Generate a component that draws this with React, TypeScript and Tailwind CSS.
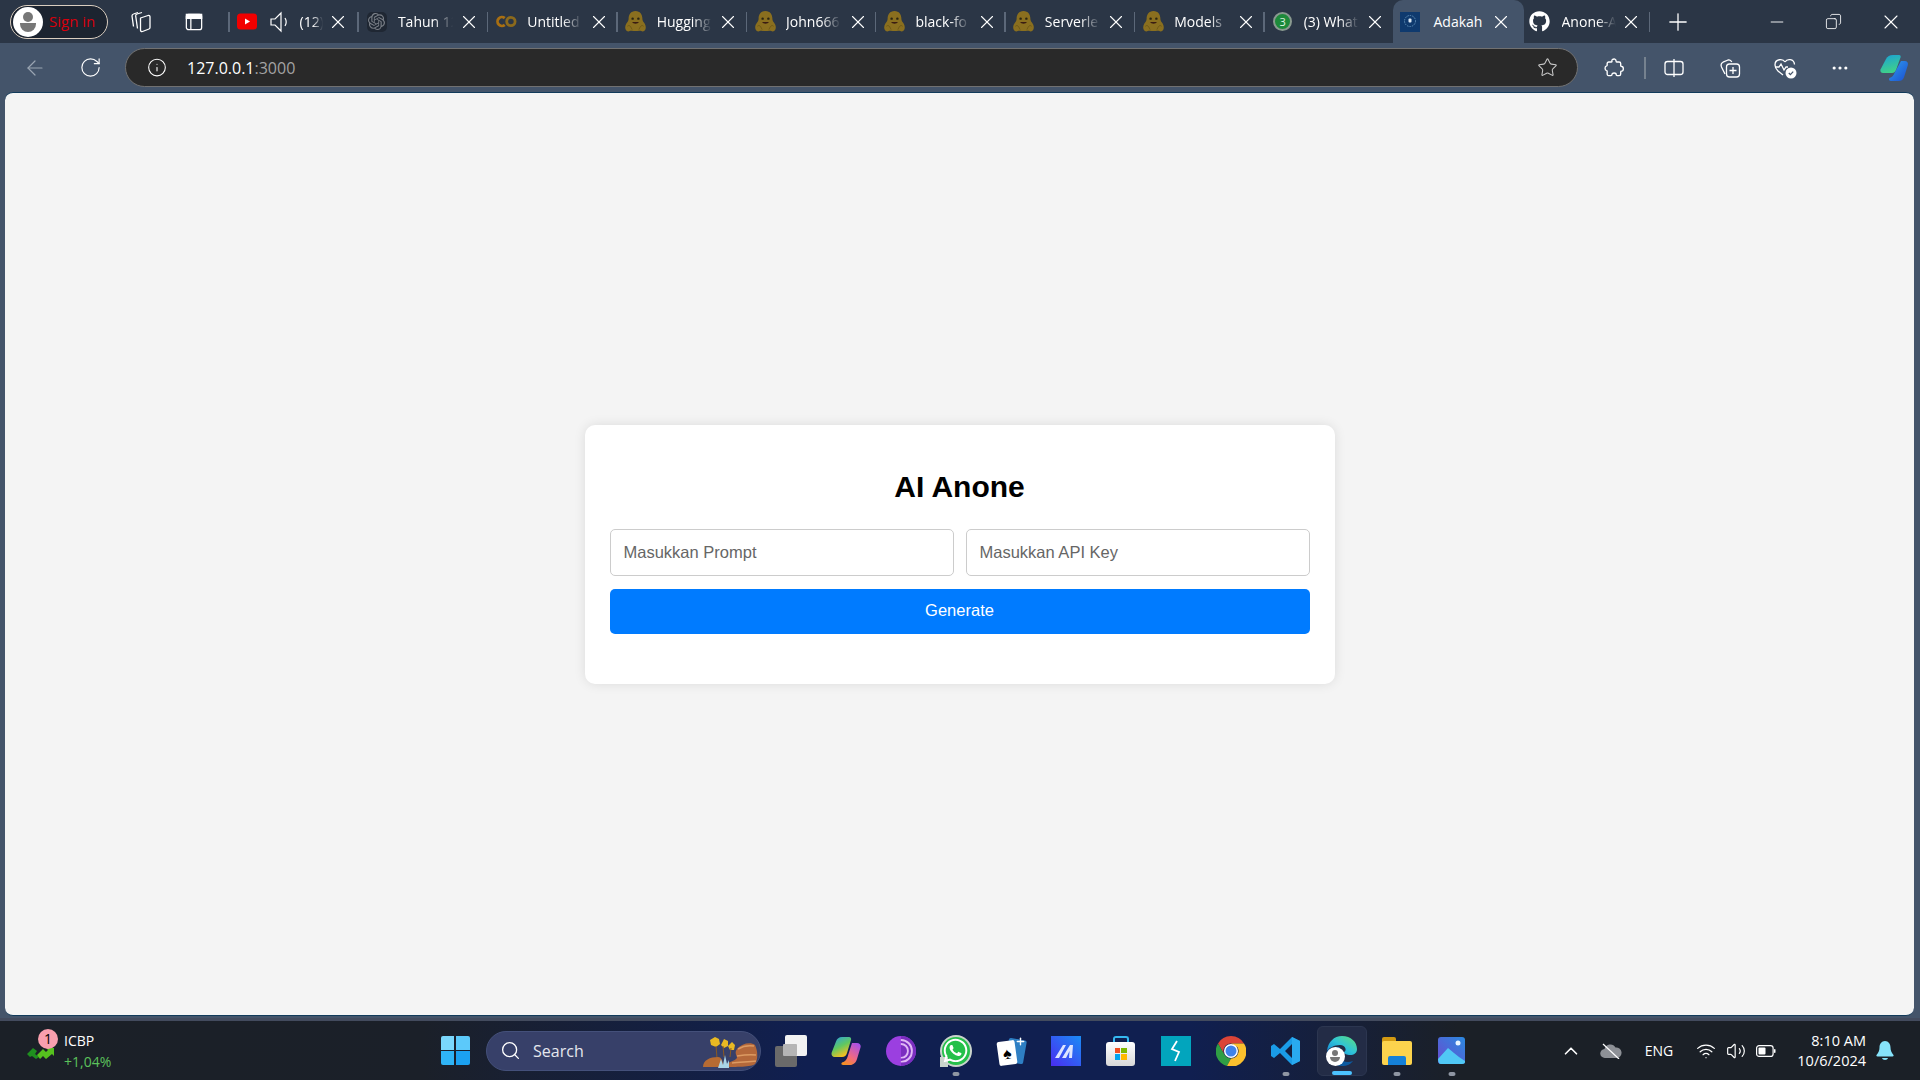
import type { ReactNode } from "react";
import { FaGithub, FaWhatsapp } from "react-icons/fa";
import { SiOpenai } from "react-icons/si";
import {
  ArrowLeft,
  ChevronUp,
  Copy,
  Ellipsis,
  Info,
  Minus,
  Plus,
  RotateCw,
  Search,
  Star,
  Volume2,
  Wifi,
  X,
} from "lucide-react";

const HuggingIcon = () => (
  <svg viewBox="0 0 24 24" className="h-[23px] w-[23px]">
    <path
      d="M12 1c4.800 0 7.200 3.800 7.200 8 0 1.500.6 2.800 1.600 4 1.600 2 2.400 4.600 1.700 6.800-.6 2-2.600 3.200-4.500 2.200-.8-.4-1.300-.5-2-.3-1.300.3-2.700.3-4 .3s-2.700 0-4-.3c-.7-.2-1.200-.1-2 .3-1.900 1-3.900-.2-4.500-2.200-.7-2.200.1-4.800 1.700-6.800 1-1.200 1.600-2.500 1.600-4C4.800 4.800 7.200 1 12 1z"
      fill="#8a6f1f"
    />
    <path d="M3.500 17c1-1.200 2.500-1 3.500.5l1.500 3M20.500 17c-1-1.200-2.500-1-3.500.5l-1.500 3" fill="none" stroke="#6f5917" strokeWidth="1" />
    <circle cx="9" cy="9" r="1.300" fill="#2a2412" />
    <circle cx="15" cy="9" r="1.300" fill="#2a2412" />
    <path d="M8.500 12.500c1 2.400 6 2.400 7 0z" fill="#3a1c12" />
  </svg>
);

const YoutubeIcon = () => (
  <svg viewBox="0 0 20 16" className="h-[17px] w-[20px]">
    <rect width="20" height="16" rx="3.500" fill="#f20000" />
    <path d="M8 5l5 3-5 3z" fill="#fff" />
  </svg>
);

const ColabIcon = () => (
  <svg viewBox="0 0 24 14" className="h-[13px] w-[21px]" fill="none" strokeWidth="3.200">
    <path d="M10 3.200a5 5 0 1 0 0 7.600" stroke="#a86f12" />
    <circle cx="17" cy="7" r="4.800" stroke="#8c6a1c" />
  </svg>
);

const AdakahIcon = () => (
  <svg viewBox="0 0 20 20" className="h-[20px] w-[20px]">
    <rect width="20" height="20" fill="#0f3a6e" />
    <circle cx="10" cy="9" r="5.500" fill="none" stroke="#5f8fb8" strokeDasharray="1.500 1" />
    <rect x="8.500" y="6.500" width="3" height="4" rx="1" fill="#dbe7f2" />
  </svg>
);

const tabs: { title: string; icon: ReactNode }[] = [
  {
    title: "Tahun 12",
    icon: (
      <span className="flex h-[20px] w-[20px] items-center justify-center rounded-[5px] bg-[#1f2733]">
        <SiOpenai className="h-[17px] w-[17px] text-[#7b8088]" />
      </span>
    ),
  },
  { title: "Untitled", icon: <ColabIcon /> },
  { title: "Hugging", icon: <HuggingIcon /> },
  { title: "John666", icon: <HuggingIcon /> },
  { title: "black-fo", icon: <HuggingIcon /> },
  { title: "Serverle", icon: <HuggingIcon /> },
  { title: "Models", icon: <HuggingIcon /> },
  {
    title: "(3) What",
    icon: (
      <span className="flex h-[19px] w-[19px] items-center justify-center rounded-full border-2 border-[#8a9a90] bg-[#1d8a3a] text-[11px] leading-none text-[#dff5e2]">
        3
      </span>
    ),
  },
];

const TabClose = () => (
  <X className="h-[22px] w-[22px] shrink-0 text-white" strokeWidth={1.200} />
);

const Tab = ({ title, icon }: { title: string; icon: ReactNode }) => (
  <div className="flex h-[43px] w-[129.400px] shrink-0 items-center">
    <div className="h-[20px] w-[1.500px] shrink-0 bg-[#5c6879]" />
    <div className="flex w-[36px] shrink-0 justify-center">{icon}</div>
    <span className="ml-[3px] w-[55px] shrink-0 overflow-hidden whitespace-nowrap text-[14px] text-white [mask-image:linear-gradient(to_right,#000_65%,transparent_100%)]">
      {title}
    </span>
    <div className="ml-[9px] flex w-[15px] shrink-0 justify-center">
      <TabClose />
    </div>
  </div>
);

const TabStrip = () => (
  <div className="flex h-[43px] shrink-0 items-center bg-[#2b3646] pl-[10px]">
    <div className="flex h-[34px] w-[98px] shrink-0 items-center rounded-full border border-[#d9cdbf] bg-[#1c2430] pl-[2px]">
      <div className="flex h-[30px] w-[30px] flex-col items-center justify-center rounded-full bg-white">
        <div className="h-[10px] w-[10px] rounded-full bg-[#777]" />
        <div className="mt-[1px] h-[9px] w-[16px] rounded-b-full bg-[#777]" />
      </div>
      <span className="ml-[6px] whitespace-nowrap text-[15px] text-[#d8000c]">Sign in</span>
    </div>
    <div className="ml-[18px] flex w-[30px] shrink-0 justify-center">
      <svg viewBox="0 0 22 22" className="h-[23px] w-[22px]" fill="none" stroke="#fff" strokeWidth="1.300" strokeLinejoin="round">
        <path d="M8 2L3.500 3.500C2.500 3.800 2 4.500 2 5.500L3.500 16" />
        <path d="M12 2L7 3.500C6 3.800 5.500 4.500 5.700 5.500L7.500 18" />
        <path d="M10.500 7.500l7.500-2.500c1-.3 2 .3 2 1.300V17c0 .8-.4 1.300-1 1.500l-6.500 2.500c-1 .3-2-.3-2-1.300z" />
      </svg>
    </div>
    <div className="ml-[23px] flex w-[30px] shrink-0 justify-center">
      <svg viewBox="0 0 20 20" className="h-[20px] w-[18px]" fill="none" stroke="#fff" strokeWidth="1.400">
        <rect x="1.500" y="1.500" width="17" height="17" rx="2.500" />
        <path d="M1.500 6h17M6.500 6v12.500" />
        <rect x="1.500" y="1.500" width="17" height="4.500" fill="#fff" />
      </svg>
    </div>
    <div className="ml-[19px] flex h-[43px] w-[129.400px] shrink-0 items-center">
      <div className="h-[20px] w-[1.500px] shrink-0 bg-[#5c6879]" />
      <div className="flex w-[34px] shrink-0 justify-center">
        <YoutubeIcon />
      </div>
      <svg viewBox="0 0 22 24" className="ml-[5px] h-[24px] w-[22px] shrink-0" fill="none" stroke="#fff" strokeWidth="1.200">
        <path d="M2 9h4l6-6v18l-6-6H2z" />
        <path d="M16 8c1.500 2.500 1.500 5.500 0 8" />
      </svg>
      <span className="ml-[9px] w-[23px] overflow-hidden whitespace-nowrap text-[14px] text-white [mask-image:linear-gradient(to_right,#000_55%,transparent_100%)]">
        (12)
      </span>
      <div className="ml-[8px] flex w-[15px] shrink-0 justify-center">
        <TabClose />
      </div>
    </div>
    {tabs.map((tab) => (
      <Tab key={tab.title} title={tab.title} icon={tab.icon} />
    ))}
    <div className="flex h-[43px] w-[131px] shrink-0 items-center rounded-t-[10px] bg-[#44546a]">
      <div className="flex w-[34px] shrink-0 justify-center">
        <AdakahIcon />
      </div>
      <span className="ml-[7px] w-[52px] shrink-0 whitespace-nowrap text-[14px] text-white">
        Adakah
      </span>
      <div className="ml-[8px] flex w-[15px] shrink-0 justify-center">
        <TabClose />
      </div>
    </div>
    <div className="flex h-[43px] w-[125px] shrink-0 items-center">
      <div className="flex w-[32px] shrink-0 justify-center">
        <FaGithub className="h-[21px] w-[21px] text-white" />
      </div>
      <span className="ml-[6px] w-[54px] shrink-0 overflow-hidden whitespace-nowrap text-[14px] text-white [mask-image:linear-gradient(to_right,#000_65%,transparent_100%)]">
        Anone-AI
      </span>
      <div className="ml-[8px] flex w-[15px] shrink-0 justify-center">
        <TabClose />
      </div>
    </div>
    <div className="h-[20px] w-[1.500px] shrink-0 bg-[#5c6879]" />
    <Plus className="ml-[14px] h-[28px] w-[28px] shrink-0 text-white" strokeWidth={1.100} />
    <div className="ml-auto flex h-[43px] items-center">
      <div className="flex w-[57px] justify-center">
        <Minus className="h-[20px] w-[20px] text-white" strokeWidth={1.100} />
      </div>
      <div className="flex w-[57px] justify-center">
        <Copy className="h-[17px] w-[17px] -scale-x-100 text-white" strokeWidth={1.200} />
      </div>
      <div className="flex w-[58px] justify-center">
        <X className="h-[24px] w-[24px] text-white" strokeWidth={1.100} />
      </div>
    </div>
  </div>
);

const CopilotLogo = ({ size }: { size: string }) => (
  <svg viewBox="0 0 30 30" className={size}>
    <defs>
      <linearGradient id="cpA" x1="0" y1="0" x2="0.300" y2="1">
        <stop offset="0" stopColor="#1aa0d8" />
        <stop offset="1" stopColor="#3fd08a" />
      </linearGradient>
      <linearGradient id="cpB" x1="0" y1="0" x2="1" y2="1">
        <stop offset="0" stopColor="#2f9df0" />
        <stop offset="1" stopColor="#1b4fd0" />
      </linearGradient>
    </defs>
    <path d="M14 2h6c1.500 0 2 1 1.500 2.500L17 17c-.8 2-2 3-4 3H4c-2 0-3-1.500-2.500-3.500L7 6c1.500-2.800 3.500-4 7-4z" fill="url(#cpA)" />
    <path d="M22 8h3.500c2.800 0 4 2 3.300 4.200l-3.800 12C24 27 22 28 19.500 28H12c-2 0-2.500-1.500-1.500-3 2.500-.8 4-2.500 5-5z" fill="url(#cpB)" />
  </svg>
);

const ToolbarIcons = () => (
  <>
    <div className="flex w-[36px] shrink-0 justify-center">
      <svg viewBox="0 0 20 20" className="h-[21px] w-[21px]" fill="none" stroke="#fff" strokeWidth="1.300" strokeLinejoin="round">
        <path d="M8 2.500c1.500-1.200 3.500-.6 3.500 1.200 0 .6 0 1 .6 1.100h2.300c1 0 1.500.6 1.500 1.500v2c0 .5.400.7 1 .7 2 0 2 4.500 0 4.500-.6 0-1 .2-1 .7v2c0 1-.5 1.500-1.500 1.500h-2c-.6 0-.8-.4-.8-1 0-2-4-2-4 0 0 .6-.3 1-.9 1H4.500C3.500 17.800 3 17 3 16v-2c0-.6.3-.8-.5-1-2-.6-2-4 0-4.500.7-.2.500-.5.500-1V6.300C3 5.300 3.600 4.800 4.500 4.800H7c.6 0 .7-.5.500-1-.1-.5.100-1 .5-1.300z" />
      </svg>
    </div>
    <div className="ml-[12px] h-[22px] w-[1.500px] shrink-0 bg-[#76828f]" />
    <div className="ml-[13px] flex w-[30px] shrink-0 justify-center">
      <svg viewBox="0 0 20 20" className="h-[20px] w-[20px]" fill="none" stroke="#fff" strokeWidth="1.300">
        <rect x="1" y="3.500" width="18" height="13" rx="2.500" />
        <path d="M10 1v18" />
      </svg>
    </div>
    <div className="ml-[26px] flex w-[30px] shrink-0 justify-center">
      <svg viewBox="0 0 22 22" className="h-[22px] w-[22px]" fill="none" stroke="#fff" strokeWidth="1.300">
        <path d="M6 17l-3.500-7c-1-2.500 0-4 1.500-4.800l5-2.200c1.800-.5 3 .3 3.800 2" />
        <rect x="7.500" y="7" width="13" height="13" rx="3" />
        <path d="M14 10v7M10.500 13.500h7" />
      </svg>
    </div>
    <div className="ml-[25px] flex w-[30px] shrink-0 justify-center">
      <svg viewBox="0 0 24 22" className="h-[22px] w-[24px]" fill="none" stroke="#fff" strokeWidth="1.300">
        <path d="M12 5C10 1.500 2 1.500 2 8c0 2 1 4 3 6l5 4" />
        <path d="M12 5c2-3.500 9-3.500 9.500 2.500" />
        <path d="M2 10h4l2-3 3 6 2-3h2" />
        <circle cx="18" cy="16" r="5.500" fill="#fff" stroke="none" />
        <path d="M15.800 16l1.600 1.600 2.800-3" stroke="#44546a" />
      </svg>
    </div>
    <div className="ml-[25px] flex w-[30px] shrink-0 justify-center">
      <Ellipsis className="h-[20px] w-[20px] text-white" strokeWidth={1.800} />
    </div>
    <div className="ml-[24px] flex w-[30px] shrink-0 justify-center">
      <CopilotLogo size="h-[30px] w-[30px]" />
    </div>
  </>
);

const Toolbar = () => (
  <div className="flex h-[49px] shrink-0 items-center bg-[#44546a] pl-[20px]">
    <div className="flex w-[30px] shrink-0 justify-center">
      <ArrowLeft className="h-[24px] w-[24px] text-[#9aa5b2]" strokeWidth={1.200} />
    </div>
    <div className="ml-[25px] flex w-[30px] shrink-0 justify-center">
      <RotateCw className="h-[23px] w-[23px] text-white" strokeWidth={1.200} />
    </div>
    <div className="ml-[20px] flex h-[39px] w-[1453px] shrink-0 items-center rounded-full border border-[#717171] bg-[#292929]">
      <div className="ml-[21px] flex w-[20px] justify-center">
        <Info className="h-[21px] w-[21px] text-white" strokeWidth={1.300} />
      </div>
      <span className="ml-[20px] whitespace-nowrap text-[16px] text-white">
        127.0.0.1<span className="text-[#a3a3a3]">:3000</span>
      </span>
      <Star className="ml-auto mr-[19px] h-[21px] w-[21px] text-[#c8c8c8]" strokeWidth={1.200} />
    </div>
    <div className="ml-[18px] flex items-center">
      <ToolbarIcons />
    </div>
  </div>
);

const GeneratorCard = () => (
  <div className="w-[750px] rounded-[10px] bg-white px-[25px] pb-[50px] pt-[40px] shadow-[0_0_12px_rgba(0,0,0,0.1)] font-['Liberation_Sans',Arial,sans-serif]">
    <h1 className="text-center text-[30px] font-bold leading-[44px] text-black">AI Anone</h1>
    <div className="mt-[20px] flex gap-[12px]">
      <div className="flex h-[47px] flex-1 items-center rounded-[5px] border border-[#cccccc] px-[13px] text-[16.500px] text-[#666]">
        Masukkan Prompt
      </div>
      <div className="flex h-[47px] flex-1 items-center rounded-[5px] border border-[#cccccc] px-[13px] text-[16.500px] text-[#666]">
        Masukkan API Key
      </div>
    </div>
    <button className="mt-[13px] flex h-[45px] w-full items-center justify-center rounded-[5px] bg-[#007bff] pb-[2px] text-[16.500px] text-white">
      Generate
    </button>
  </div>
);

const TaskSlot = ({
  children,
  dot,
  active,
}: {
  children: ReactNode;
  dot?: boolean;
  active?: boolean;
}) => (
  <div className="flex h-[59px] w-[55.100px] shrink-0 items-center justify-center">
    <div
      className={
        active
          ? "relative flex h-[50px] w-[50px] items-center justify-center rounded-[6px] border border-[#2c3650] bg-[#232c46]"
          : "relative flex h-[50px] w-[50px] items-center justify-center"
      }
    >
      {children}
      {dot && (
        <div className="absolute bottom-0 left-1/2 h-[4px] w-[7px] -translate-x-1/2 rounded-full bg-[#8f96a3]" />
      )}
      {active && (
        <div className="absolute bottom-0 left-1/2 h-[4px] w-[20px] -translate-x-1/2 rounded-full bg-[#4cc2ff]" />
      )}
    </div>
  </div>
);

const SearchScene = () => (
  <svg viewBox="0 0 56 36" className="h-[36px] w-[56px]">
    <path d="M13 4l4 2 1 5-4 3-5-2-1-5zM22 6l4 2 0 5-4 2-3-3zM30 9l3 3-1 5-4 0-2-4z" fill="#e8b923" />
    <path d="M14 13l1 12M21 13l1 11M29 15l-1 9" stroke="#8a5a22" strokeWidth="1" />
    <path d="M1 34c0-7 7-10 15-10 3 0 5 3 5 10z" fill="#b66b33" />
    <path d="M22 34c4-6 10-5 13-9 0-3-3-5 0-9 5-6 14-7 18-4 3 6 3 15 0 19-3 3-20 3-31 3z" fill="#b4683a" />
    <path d="M36 16c5-3 10-4 16-3M35 23c6-1 12-2 19-1M30 30c7-1 16-1 24-2" stroke="#dc9a62" strokeWidth="1.500" fill="none" />
    <path d="M16 35l3-9 2 6 2-10 2 9 2-4v8z" fill="#a9d4e6" />
  </svg>
);

const Taskbar = () => (
  <div className="flex h-[62px] shrink-0 items-center border-t-[3px] border-[#434b5e] bg-[linear-gradient(to_right,#1b2027_0%,#1b2029_22%,#101f50_42%,#101f50_62%,#1b2027_76%,#1b2027_100%)] font-['Open_Sans',sans-serif]">
    <div className="flex w-[427.500px] shrink-0 items-center pl-[25px]">
      <div className="relative h-[40px] w-[39px] shrink-0">
        <svg viewBox="0 0 28 13" className="absolute bottom-[12px] left-[2px] h-[13px] w-[28px]">
          <path d="M0 8l6-6 4 3-2 3 4 3-3 2-4-3-2 1z" fill="#1f8f1f" />
          <path d="M10 9l6-6 3 3 2-2-2-2h8v8l-2-2-6 5-3-3-3 3z" fill="#56c11e" />
        </svg>
        <div className="absolute -top-[2px] left-[13px] flex h-[20px] w-[20px] items-center justify-center rounded-full bg-[#f99fae] text-[14px] leading-none text-black">
          1
        </div>
      </div>
      <div className="flex flex-col text-[14px] leading-[21px]">
        <span className="text-white">ICBP</span>
        <span className="text-[#5cc25c]">+1,04%</span>
      </div>
    </div>
    <TaskSlot>
      <div className="grid h-[29px] w-[29px] grid-cols-2 gap-[1.500px]">
        <div className="rounded-tl-[2px] bg-[#7ad7fc]" />
        <div className="rounded-tr-[2px] bg-[#5cc9fa]" />
        <div className="rounded-bl-[2px] bg-[#2fb4f6]" />
        <div className="rounded-br-[2px] bg-[#1ba1f1]" />
      </div>
    </TaskSlot>
    <div className="ml-[3.500px] mr-[2px] flex h-[40px] w-[275px] shrink-0 items-center rounded-full border border-[#44507a] bg-[#374069]">
      <Search className="ml-[13px] h-[21px] w-[21px] text-white" strokeWidth={1.500} />
      <span className="ml-[12px] text-[16px] text-[#e5e7ee]">Search</span>
      <div className="ml-auto mr-[2px]">
        <SearchScene />
      </div>
    </div>
    <TaskSlot>
      <div className="relative h-[32px] w-[32px]">
        <div className="absolute bottom-0 left-0 h-[21px] w-[22px] rounded-[2px] bg-[#6a6a6a]" />
        <div className="absolute right-0 top-0 h-[21px] w-[22px] rounded-[2px] bg-[#f2f2f2]" />
        <div className="absolute left-[8px] top-[9px] h-[12px] w-[14px] rounded-[1px] bg-[#b5b5b5]" />
      </div>
    </TaskSlot>
    <TaskSlot>
      <svg viewBox="0 0 30 30" className="h-[30px] w-[30px]">
        <defs>
          <linearGradient id="cwA" x1="0" y1="0" x2="0.500" y2="1">
            <stop offset="0" stopColor="#2aa0e8" />
            <stop offset="0.550" stopColor="#60c860" />
            <stop offset="1" stopColor="#f5c020" />
          </linearGradient>
          <linearGradient id="cwB" x1="0.800" y1="0" x2="0.200" y2="1">
            <stop offset="0" stopColor="#a850e8" />
            <stop offset="0.600" stopColor="#f06a80" />
            <stop offset="1" stopColor="#f59020" />
          </linearGradient>
        </defs>
        <path d="M11 1h7c1.800 0 2.500 1.500 2 3L16 17c-.8 2.500-2.200 4-5 4H4c-2.500 0-4-2-3.300-4.500L5 5.500C6 2.500 8 1 11 1z" fill="url(#cwA)" />
        <path d="M21 7h5c2.800 0 4.200 2 3.500 4.500L26 23c-1 3.500-3.500 6-7 6h-7c-2 0-2-1.500-1-2.500 3-.8 4.500-2.500 5.500-5.500z" fill="url(#cwB)" />
      </svg>
    </TaskSlot>
    <TaskSlot>
      <div className="relative h-[30px] w-[30px] overflow-hidden rounded-full bg-[#9b3fe0]">
        <div className="absolute right-0 top-0 h-[30px] w-[15px] bg-[#7b2ec0]" />
        <div className="absolute left-[3px] top-[3px] h-[24px] w-[24px] rounded-full border-2 border-[#e0b8f5] [clip-path:inset(0_0_0_50%)]" />
        <div className="absolute left-[7px] top-[7px] h-[16px] w-[16px] rounded-full border-2 border-[#e0b8f5] [clip-path:inset(0_0_0_50%)]" />
      </div>
    </TaskSlot>
    <TaskSlot dot>
      <div className="relative flex h-[28px] w-[28px] items-center justify-center rounded-full bg-[#25c04a] ring-2 ring-[#c9d4cc]">
        <div className="absolute -bottom-[2px] -left-[2px] h-[10px] w-[8px] bg-[#c9d4cc]" />
        <FaWhatsapp className="relative h-[27px] w-[27px] text-white" />
      </div>
    </TaskSlot>
    <TaskSlot>
      <div className="relative h-[28px] w-[28px]">
        <div className="absolute right-0 top-[2px] h-[24px] w-[18px] rotate-[10deg] rounded-[2px] bg-[#2e7fc4]" />
        <div className="absolute left-[1px] top-[4px] flex h-[24px] w-[18px] -rotate-[8deg] items-center justify-center rounded-[2px] bg-white text-[16px] leading-none text-black">
          ♠
        </div>
        <Plus className="absolute -right-[1px] -top-[1px] h-[11px] w-[11px] text-white" strokeWidth={3} />
      </div>
    </TaskSlot>
    <TaskSlot>
      <svg viewBox="0 0 30 30" className="h-[30px] w-[30px]">
        <defs>
          <linearGradient id="maG" x1="0" y1="1" x2="1" y2="0">
            <stop offset="0" stopColor="#4a2cf0" />
            <stop offset="1" stopColor="#1a8cf5" />
          </linearGradient>
        </defs>
        <rect width="30" height="30" fill="url(#maG)" />
        <path d="M4 22L12 9h3L8 22zM11 22l8-13h3l-1 13h-3l.5-7L15 22z" fill="#dde4ff" />
      </svg>
    </TaskSlot>
    <TaskSlot>
      <div className="relative h-[30px] w-[30px]">
        <div className="absolute left-[7px] top-0 h-[8px] w-[16px] rounded-t-[3px] border-2 border-b-0 border-[#35b8f0]" />
        <div className="absolute bottom-0 left-0 flex h-[24px] w-[29px] items-center justify-center rounded-[3px] bg-[linear-gradient(#ffffff,#d8d8d8)]">
          <div className="grid h-[12px] w-[12px] grid-cols-2 gap-[1px]">
            <div className="bg-[#f25022]" />
            <div className="bg-[#7fba00]" />
            <div className="bg-[#00a4ef]" />
            <div className="bg-[#ffb900]" />
          </div>
        </div>
      </div>
    </TaskSlot>
    <TaskSlot>
      <div className="flex h-[30px] w-[30px] items-center justify-center bg-[#02a5bd]">
        <svg viewBox="0 0 16 22" className="h-[22px] w-[16px]" fill="none" stroke="#fff" strokeWidth="1.800">
          <path d="M9 1L4 9l7 3-4 9" />
        </svg>
      </div>
    </TaskSlot>
    <TaskSlot>
      <svg viewBox="0 0 30 30" className="h-[30px] w-[30px]">
        <path d="M15 0a15 15 0 0 1 13 7.500H15a7.500 7.500 0 0 0-6.500 11.300L2 7.500A15 15 0 0 1 15 0z" fill="#db4437" />
        <path d="M2 7.500l6.500 11.300A7.500 7.500 0 0 0 15 22.500L11 30A15 15 0 0 1 2 7.500z" fill="#2f9e44" />
        <path d="M28 7.500A15 15 0 0 1 11 30l4-7.500a7.500 7.500 0 0 0 6.500-11.300L15 7.500z" fill="#fbc02d" />
        <circle cx="15" cy="15" r="7" fill="#fff" />
        <circle cx="15" cy="15" r="5.500" fill="#3f83ea" />
      </svg>
    </TaskSlot>
    <TaskSlot dot>
      <svg viewBox="0 0 30 30" className="h-[30px] w-[30px]">
        <path d="M21 1l8 4v20l-8 4-12-12-6 5-3-2v-10l3-2 6 5zM21 8l-7 7 7 7z" fill="#1a9ce8" fillRule="evenodd" />
        <path d="M21 1l8 4v20l-8 4z" fill="#29aaf0" />
      </svg>
    </TaskSlot>
    <TaskSlot active>
      <div className="relative h-[30px] w-[30px]">
        <svg viewBox="0 0 30 30" className="h-[30px] w-[30px]">
          <defs>
            <linearGradient id="egA" x1="0" y1="1" x2="1" y2="0">
              <stop offset="0" stopColor="#0e7fd8" />
              <stop offset="0.500" stopColor="#2fc3d8" />
              <stop offset="1" stopColor="#5de07a" />
            </linearGradient>
          </defs>
          <path d="M15 0c9 0 15 6 15 13 0 4-3 6-7 6-3 0-6-1-6-3 3-1 2-7-4-7C7 9 2 12 0 15 1 6 7 0 15 0z" fill="url(#egA)" />
          <path d="M0 15c0 8 6 15 15 15 5 0 9-2 11-5-5 2-11 1-14-3-2-3-2-8 1-11-6 0-11 2-13 4z" fill="#0c5aa0" />
        </svg>
        <div className="absolute -left-[1px] bottom-0 flex h-[19px] w-[19px] flex-col items-center justify-center rounded-full bg-white">
          <div className="h-[6px] w-[6px] rounded-full bg-[#777]" />
          <div className="mt-[1px] h-[5px] w-[10px] rounded-b-full bg-[#777]" />
        </div>
      </div>
    </TaskSlot>
    <TaskSlot dot>
      <div className="relative h-[28px] w-[30px]">
        <div className="absolute left-0 top-0 h-[10px] w-[14px] rounded-t-[2px] bg-[#d39a12]" />
        <div className="absolute bottom-0 left-0 h-[24px] w-[30px] rounded-[2px] bg-[#fcd34d]" />
        <div className="absolute bottom-0 left-[6px] h-[9px] w-[18px] rounded-t-[2px] bg-[#1581d8]" />
      </div>
    </TaskSlot>
    <TaskSlot dot>
      <svg viewBox="0 0 27 27" className="h-[27px] w-[27px]">
        <defs>
          <linearGradient id="phA" x1="0" y1="1" x2="1" y2="0">
            <stop offset="0" stopColor="#6a4ad0" />
            <stop offset="1" stopColor="#2a8ae0" />
          </linearGradient>
        </defs>
        <rect width="27" height="27" rx="3" fill="url(#phA)" />
        <circle cx="20" cy="6" r="2.500" fill="#e8f4ff" />
        <path d="M0 22l10-11 6 5 5 4 6 4v1c0 1-1 2-3 2H3c-2 0-3-2-3-5z" fill="#50c8f5" />
      </svg>
    </TaskSlot>
    <div className="ml-auto flex items-center pr-[16px] text-white">
      <div className="flex w-[40px] justify-center">
        <ChevronUp className="h-[22px] w-[22px]" strokeWidth={1.800} />
      </div>
      <div className="flex w-[40px] justify-center">
        <svg viewBox="0 0 22 16" className="h-[16px] w-[22px]">
          <path d="M5 15a4.500 4.500 0 0 1-.5-9 6 6 0 0 1 11-1.500A5 5 0 0 1 17 15z" fill="#8d9096" />
          <path d="M3 1l16 15" stroke="#fff" strokeWidth="1.200" />
        </svg>
      </div>
      <span className="w-[56px] text-center text-[14px]">ENG</span>
      <div className="ml-[4px] flex w-[30px] justify-center">
        <Wifi className="h-[20px] w-[20px]" strokeWidth={1.500} />
      </div>
      <div className="flex w-[29px] justify-center">
        <Volume2 className="h-[20px] w-[20px]" strokeWidth={1.400} />
      </div>
      <div className="flex w-[32px] justify-center">
        <svg viewBox="0 0 20 12" className="h-[12px] w-[20px]" fill="none">
          <rect x="0.600" y="0.600" width="16.500" height="10.800" rx="2.500" stroke="#fff" strokeWidth="1.200" />
          <rect x="2.500" y="2.500" width="7" height="7" rx="1" fill="#fff" />
          <rect x="18" y="4" width="1.500" height="4" rx="0.700" fill="#fff" />
        </svg>
      </div>
      <div className="flex w-[84px] flex-col items-end text-[14.500px] leading-[20px]">
        <span>8:10 AM</span>
        <span>10/6/2024</span>
      </div>
      <div className="flex w-[38px] justify-center">
        <svg viewBox="0 0 18 20" className="h-[20px] w-[18px]" fill="#86e3fa">
          <path d="M9 0c3.500 0 5.500 3 5.500 6.500 0 3 1 5 3 7.500.3.600 0 1.500-1 1.500H1.500c-1 0-1.300-.9-1-1.500 2-2.500 3-4.500 3-7.500C3.500 3 5.500 0 9 0z" />
          <path d="M6 17h6c-.5 2.500-5.500 2.500-6 0z" />
        </svg>
      </div>
    </div>
  </div>
);

export default function App() {
  return (
    <div className="flex h-screen flex-col overflow-hidden font-['Open_Sans',sans-serif]">
      <TabStrip />
      <Toolbar />
      <div className="flex min-h-0 flex-1 bg-[#44546a] pb-[2px] pl-[5px] pr-[6px]">
        <div className="flex flex-1 items-center justify-center rounded-[8px] border-y border-[#113a5a] bg-[#f4f4f4]">
          <GeneratorCard />
        </div>
      </div>
      <Taskbar />
    </div>
  );
}
